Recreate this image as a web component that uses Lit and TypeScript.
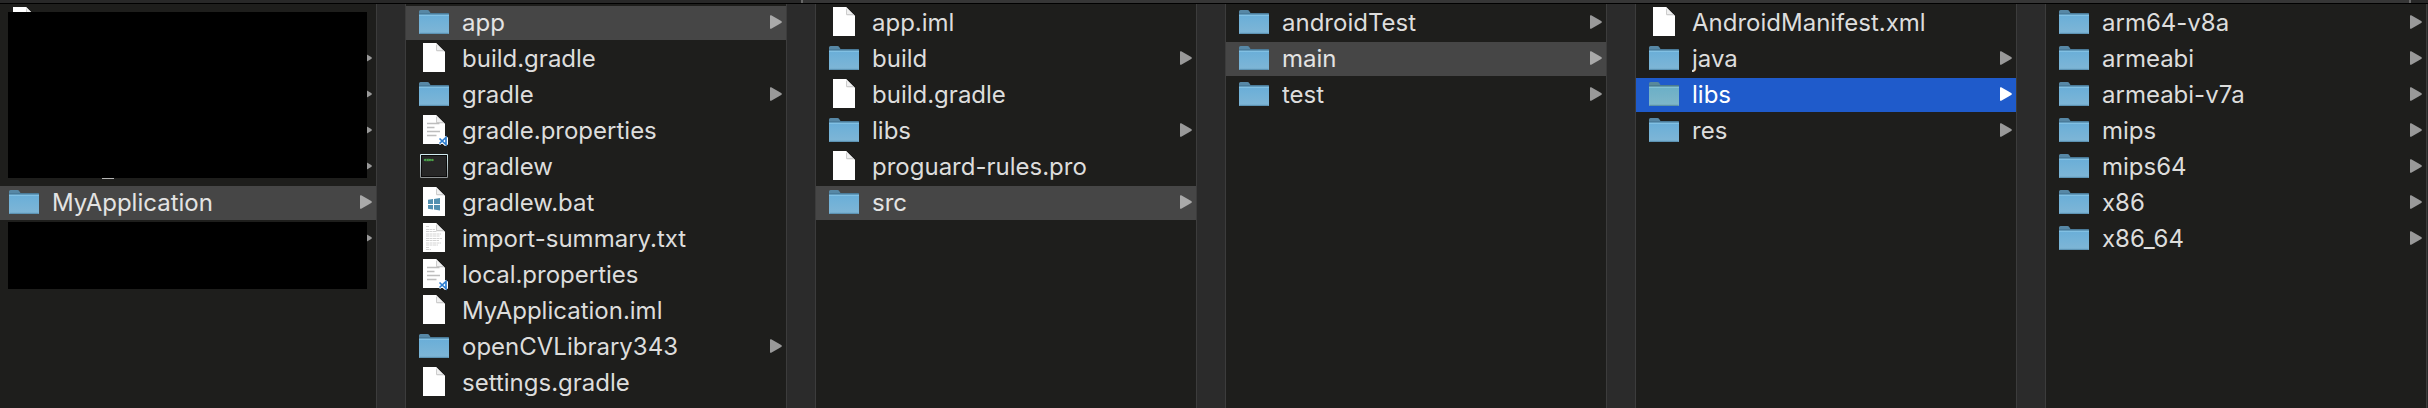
import { LitElement, html, svg, css, nothing } from "lit";
import { customElement, property } from "lit/decorators.js";
import { classMap } from "lit/directives/class-map.js";

type Kind = "folder" | "file" | "code" | "exec" | "bat" | "txt";
interface Entry {
  name: string;
  kind: Kind;
  state?: "path" | "active";
  mark?: boolean;
}

const e = (name: string, kind: Kind = "folder", state?: Entry["state"]): Entry => ({ name, kind, state });

const COLUMNS: Entry[][] = [
  [
    e("", "file"),
    e(""),
    e(""),
    e(""),
    { name: "", kind: "folder", mark: true },
    e("MyApplication", "folder", "path"),
    e(""),
  ],
  [
    e("app", "folder", "path"),
    e("build.gradle", "file"),
    e("gradle"),
    e("gradle.properties", "code"),
    e("gradlew", "exec"),
    e("gradlew.bat", "bat"),
    e("import-summary.txt", "txt"),
    e("local.properties", "code"),
    e("MyApplication.iml", "file"),
    e("openCVLibrary343"),
    e("settings.gradle", "file"),
  ],
  [
    e("app.iml", "file"),
    e("build"),
    e("build.gradle", "file"),
    e("libs"),
    e("proguard-rules.pro", "file"),
    e("src", "folder", "path"),
  ],
  [e("androidTest"), e("main", "folder", "path"), e("test")],
  [e("AndroidManifest.xml", "file"), e("java"), e("libs", "folder", "active"), e("res")],
  [e("arm64-v8a"), e("armeabi"), e("armeabi-v7a"), e("mips"), e("mips64"), e("x86"), e("x86_64")],
];

const page = svg`
  <path d="M4 1H17L26 10V30H4Z" fill="#fff"/>
  <path d="M17 1L26 10H19Q17 10 17 8Z" fill="#f0f0f0"/>
  <path d="M17.5 3V8.5H24" fill="none" stroke="#c4c4c4" stroke-width="0.8"/>`;

const drawings = {
  folder: svg`
    <defs>
      <linearGradient id="body" x1="0" y1="0" x2="0" y2="1">
        <stop offset="0" stop-color="#69aed8"/>
        <stop offset="1" stop-color="#7fb6d6"/>
      </linearGradient>
    </defs>
    <path d="M0 28V5.5Q0 4 1.5 4H8.5Q9.600 4 10.200 5L11.500 7H29Q30 7 30 8V28Z" fill="#5788a6"/>
    <path d="M0 8.500H30V27Q30 28 29 28H1Q0 28 0 27Z" fill="url(#body)"/>
    <path d="M0 8H30" stroke="#3f6f8c" stroke-width="1"/>
    <path d="M0 9.200H30" stroke="#8cc8e8" stroke-width="1"/>
    <path d="M0.500 27.400H29.500" stroke="#5d93b3" stroke-width="1.200"/>`,
  file: page,
  code: svg`${page}
    <path d="M8 9.500H20.500M8 13.500H15.500M8 17.500H21M8 21.500H17.500" stroke="#bdbdbd" stroke-width="1.500"/>
    <path d="M26 22L29 23.500V30.500L26 32L23 29.500L21 31L19.500 29.500L21.500 27L19.500 24.500L21 23L23 24.500Z" fill="#fff"/>
    <path d="M20.500 24.500L27 30.500V23.500L20.500 29.500" fill="none" stroke="#2f7fd0" stroke-width="1.700"/>`,
  exec: svg`
    <defs>
      <linearGradient id="rim" x1="0" y1="0" x2="0" y2="1">
        <stop offset="0" stop-color="#d3edf3"/>
        <stop offset="1" stop-color="#8b8f90"/>
      </linearGradient>
    </defs>
    <rect x="1" y="4" width="28" height="24" rx="1" fill="url(#rim)"/>
    <rect x="2" y="5" width="26" height="22" fill="#0b0b0b"/>
    <rect x="3" y="6" width="24" height="20" fill="#262626"/>
    <text x="5" y="11" class="tiny">exec</text>`,
  bat: svg`${page}
    <path d="M9 13.800L14 13V18H9ZM15 12.900L21 12V18H15ZM9 19H14V23.500L9 22.700ZM15 19H21V24.500L15 23.600Z" fill="#5290b0"/>`,
  txt: svg`${page}
    <path d="M7 4.500H10M7 7.500H16M7 9.500H18M7 12H22M7 14H21M7 16.500H23M7 18.500H20M7 21H22M7 23H19M7 25.500H10M7 27.500H12" stroke="#cfcfcf" stroke-width="0.900" stroke-dasharray="3 0.500"/>`,
};

@customElement("finder-row")
class FinderRow extends LitElement {
  @property({ attribute: false }) entry!: Entry;

  static styles = css`
    :host {
      display: block;
    }
    .row {
      box-sizing: border-box;
      display: flex;
      align-items: center;
      width: 100%;
      height: 34px;
      margin: 0;
      padding: 0 4px 0 var(--inset, 13px);
      border: 0;
      background: transparent;
      color: #dddddc;
      font: 400 24px/34px Inter, "Liberation Sans", sans-serif;
      text-align: left;
    }
    .path {
      background: #464646;
      color: #e3e3e3;
    }
    .active {
      background: #1f5bcb;
      color: #ffffff;
    }
    .icon {
      flex: none;
      width: 30px;
      height: 34px;
      overflow: visible;
    }
    .active .icon {
      filter: hue-rotate(-10deg) saturate(0.85);
    }
    .tiny {
      font: 700 4px "Liberation Mono", monospace;
      fill: #5fd060;
      stroke: #4fae50;
      stroke-width: 0.3px;
    }
    .name {
      flex: 1;
      min-width: 0;
      height: 34px;
      margin-left: 13px;
      overflow: hidden;
      white-space: nowrap;
      text-overflow: ellipsis;
    }
    .mark {
      width: 12px;
      height: 2px;
      margin: 27px 0 0 50px;
      background: #b5b5b4;
    }
    .arrow {
      flex: none;
      width: 12px;
      height: 34px;
      fill: #999999;
    }
    .path .arrow {
      fill: #a9a9a9;
    }
    .active .arrow {
      fill: #ffffff;
    }
  `;

  render() {
    const { name, kind, state, mark } = this.entry;
    return html`<button
      type="button"
      aria-label=${name || kind}
      class=${classMap({ row: true, path: state === "path", active: state === "active" })}
    >
      <svg class="icon" viewBox="0 0 30 34" aria-hidden="true">${drawings[kind]}</svg>
      <span class="name">${name}${mark ? html`<div class="mark"></div>` : nothing}</span>
      ${kind === "folder"
        ? html`<svg class="arrow" viewBox="0 0 12 34" aria-hidden="true">
            <path d="M0 10Q0 8.800 1.200 9.300L11.200 15Q12.500 16 11.200 17L1.200 22.700Q0 23.200 0 22Z" />
          </svg>`
        : nothing}
    </button>`;
  }
}

@customElement("app-root")
class AppRoot extends LitElement {
  static styles = css`
    :host {
      display: flex;
      flex-direction: column;
      min-height: 100vh;
      background: #1e1e1c;
    }
    .header {
      display: flex;
      height: 3px;
      border-bottom: 1px solid #000000;
      background: #282828;
    }
    .header-start {
      flex: 801;
    }
    .header-mid {
      flex: 1606;
      border: solid #686868;
      border-width: 0 2px;
      background: #363636;
    }
    .header-end {
      flex: 17;
    }
    .browser {
      display: flex;
      flex: 1;
    }
    .column {
      display: flex;
      flex: 1 1 380px;
      flex-direction: column;
      gap: 2px;
      min-width: 0;
      padding-top: 2px;
    }
    .first {
      --inset: 9px;
      position: relative;
      flex-basis: 376px;
    }
    .gutter {
      box-sizing: border-box;
      flex: none;
      width: 30px;
      border: solid #3c3c3c;
      border-width: 0 1px;
      background: #2b2b2b;
    }
    .edge {
      width: 2px;
      border-right: 0;
    }
    .cover {
      position: absolute;
      left: 8px;
      right: 9px;
      background: #000000;
    }
    .upper {
      top: 8px;
      height: 166px;
    }
    .lower {
      top: 218px;
      height: 67px;
    }
  `;

  render() {
    return html`
      <div class="header">
        <div class="header-start"></div>
        <div class="header-mid"></div>
        <div class="header-end"></div>
      </div>
      <main class="browser">
        ${COLUMNS.map(
          (entries, i) => html`
            <section class=${classMap({ column: true, first: i === 0 })}>
              ${entries.map((entry) => html`<finder-row .entry=${entry}></finder-row>`)}
              ${i === 0
                ? html`<div class="cover upper"></div>
                    <div class="cover lower"></div>`
                : nothing}
            </section>
            <div class=${classMap({ gutter: true, edge: i === COLUMNS.length - 1 })}></div>
          `
        )}
      </main>
    `;
  }
}
